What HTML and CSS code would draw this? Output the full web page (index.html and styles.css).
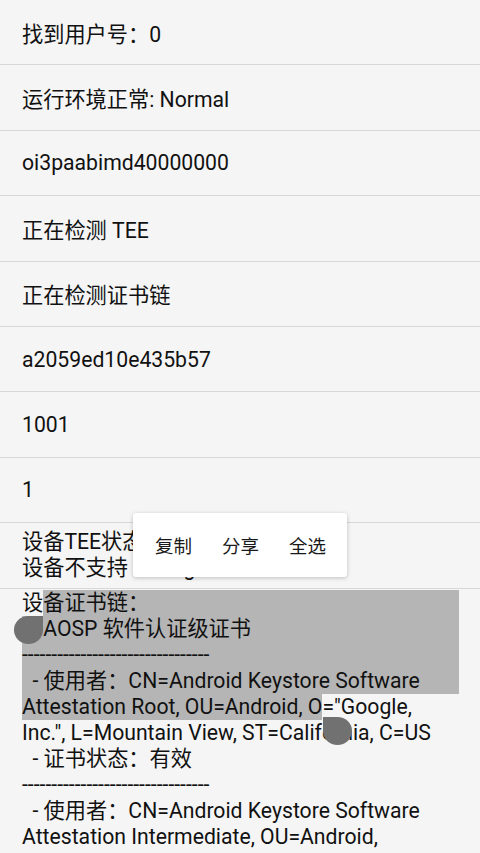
FILE: index.html
```html
<!DOCTYPE html>
<html lang="zh-CN">
<head>
<meta charset="utf-8">
<title>检测</title>
<link rel="stylesheet" href="styles.css">
</head>
<body>
<div class="screen">
  <ul class="list">
    <li class="row">找到用户号：0</li>
    <li class="row">运行环境正常: Normal</li>
    <li class="row">oi3paabimd40000000</li>
    <li class="row">正在检测 TEE</li>
    <li class="row">正在检测证书链</li>
    <li class="row">a2059ed10e435b57</li>
    <li class="row">1001</li>
    <li class="row">1</li>
    <li class="row row-multi">
      <div class="line">设备TEE状态: 不支持</div>
      <div class="line">设备不支持 Strongbox</div>
    </li>
    <li class="row row-chain">
      <div class="line line-split"><span class="plain">设</span><span class="sel fill">备证书链：</span></div>
      <div class="line sel">　AOSP 软件认证级证书</div>
      <div class="line sel">--------------------------------</div>
      <div class="line sel">  - 使用者：CN=Android Keystore Software</div>
      <div class="line"><span class="sel">Attestation Root, OU=Android, O</span>="Google,</div>
      <div class="line">Inc.", L=Mountain View, ST=California, C=US</div>
      <div class="line">  - 证书状态：有效</div>
      <div class="line">--------------------------------</div>
      <div class="line">  - 使用者：CN=Android Keystore Software</div>
      <div class="line">Attestation Intermediate, OU=Android,</div>
      <div class="line">O="Google Inc.", ST=California, C=US</div>
    </li>
  </ul>

  <div class="menu">
    <span class="menu-item">复制</span>
    <span class="menu-item">分享</span>
    <span class="menu-item">全选</span>
  </div>
  <div class="handle handle-left"></div>
  <div class="handle handle-right"></div>
</div>
</body>
</html>
```

FILE: styles.css
```css
* { box-sizing: border-box; }

html, body {
  margin: 0;
  padding: 0;
}

body {
  background: #f5f5f5;
  font-family: Roboto, "Noto Sans CJK SC", sans-serif;
  color: #111111;
  font-size: 21.2px;
  overflow: hidden;
}

.screen {
  position: relative;
  width: 480px;
  height: 853px;
  overflow: hidden;
}

.list {
  list-style: none;
  margin: 0;
  padding: 0;
  display: flex;
  flex-direction: column;
}

.row {
  height: 65.4px;
  border-bottom: 1px solid #d8d8d8;
  padding: 0 22px;
  display: flex;
  align-items: center;
  white-space: pre;
  flex: none;
}

.row-multi {
  flex-direction: column;
  align-items: stretch;
  justify-content: center;
  white-space: normal;
}

.row-chain {
  height: auto;
  border-bottom: none;
  display: block;
  white-space: normal;
  padding: 1px 21px 0 22px;
}

.line {
  height: 26px;
  line-height: 26px;
  white-space: pre;
}

.line-split {
  display: flex;
}

.plain {
  background: #f5f5f5;
}

.fill {
  flex: 1;
}

.sel {
  background: #b5b5b5;
}

.line span.sel {
  display: inline-block;
  height: 26px;
}

.menu {
  position: absolute;
  left: 133px;
  top: 513px;
  width: 214px;
  height: 64px;
  background: #ffffff;
  border-radius: 3px;
  box-shadow: 0 1px 4px rgba(0, 0, 0, 0.22);
  display: flex;
  align-items: center;
  padding: 0 7px;
}

.menu-item {
  padding: 0 15px;
  font-size: 18.5px;
  color: #1a1a1a;
  white-space: nowrap;
}

.handle {
  position: absolute;
  width: 29px;
  height: 28px;
  background: #717171;
}

.handle-left {
  left: 14px;
  top: 616px;
  border-radius: 50% 0 50% 50%;
}

.handle-right {
  left: 323px;
  top: 717px;
  border-radius: 0 50% 50% 50%;
}
```
